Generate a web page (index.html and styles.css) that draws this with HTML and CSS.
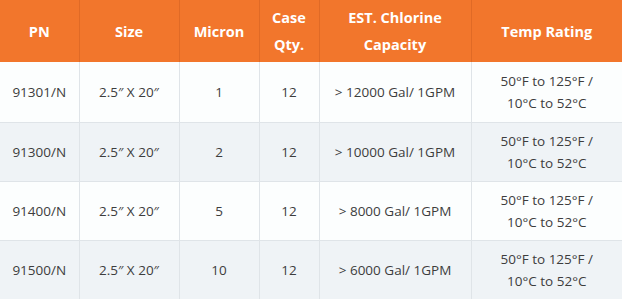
FILE: index.html
```html
<!DOCTYPE html>
<html>
<head>
<meta charset="utf-8">
<link rel="stylesheet" href="styles.css">
</head>
<body>
<table class="spec">
<colgroup>
<col class="c-pn"><col class="c-size"><col class="c-micron"><col class="c-qty"><col class="c-cap"><col class="c-temp">
</colgroup>
<thead>
<tr><th>PN</th><th>Size</th><th>Micron</th><th>Case<br>Qty.</th><th>EST. Chlorine<br>Capacity</th><th>Temp Rating</th></tr>
</thead>
<tbody>
<tr><td>91301/N</td><td>2.5″ X 20″</td><td>1</td><td>12</td><td>&gt; 12000 Gal/ 1GPM</td><td>50°F to 125°F /<br>10°C to 52°C</td></tr>
<tr><td>91300/N</td><td>2.5″ X 20″</td><td>2</td><td>12</td><td>&gt; 10000 Gal/ 1GPM</td><td>50°F to 125°F /<br>10°C to 52°C</td></tr>
<tr><td>91400/N</td><td>2.5″ X 20″</td><td>5</td><td>12</td><td>&gt; 8000 Gal/ 1GPM</td><td>50°F to 125°F /<br>10°C to 52°C</td></tr>
<tr><td>91500/N</td><td>2.5″ X 20″</td><td>10</td><td>12</td><td>&gt; 6000 Gal/ 1GPM</td><td>50°F to 125°F /<br>10°C to 52°C</td></tr>
</tbody>
</table>
</body>
</html>
```
FILE: styles.css
```css
html, body { margin: 0; padding: 0; background: #fcfefe; }
.spec {
  width: 622px;
  border-collapse: collapse;
  table-layout: fixed;
  font-family: "Open Sans", "Noto Sans", sans-serif;
}
.c-pn { width: 79px; }
.c-size { width: 100px; }
.c-micron { width: 80px; }
.c-qty { width: 60px; }
.c-cap { width: 152px; }
.c-temp { width: 151px; }
.spec th {
  background: #f2762c;
  color: #fff;
  font-weight: 700;
  font-size: 14.5px;
  line-height: 27px;
  height: 62px;
  padding: 0 4px;
  text-align: center;
  border-left: 1px solid #e06a26;
  box-sizing: border-box;
}
.spec th:first-child, .spec td:first-child { border-left: none; }
.spec td {
  color: #3d3d3d;
  font-size: 13.5px;
  line-height: 22px;
  text-align: center;
  padding: 7px 4px;
  height: 59px;
  box-sizing: border-box;
  border-left: 1px solid #dfe4e8;
  border-top: 1px solid #dfe4e8;
}
.spec tbody tr:first-child td { border-top: none; height: 60px; }
.spec tbody tr:nth-child(odd) td { background: #fcfefe; }
.spec tbody tr:nth-child(even) td { background: #eff3f6; }
```
